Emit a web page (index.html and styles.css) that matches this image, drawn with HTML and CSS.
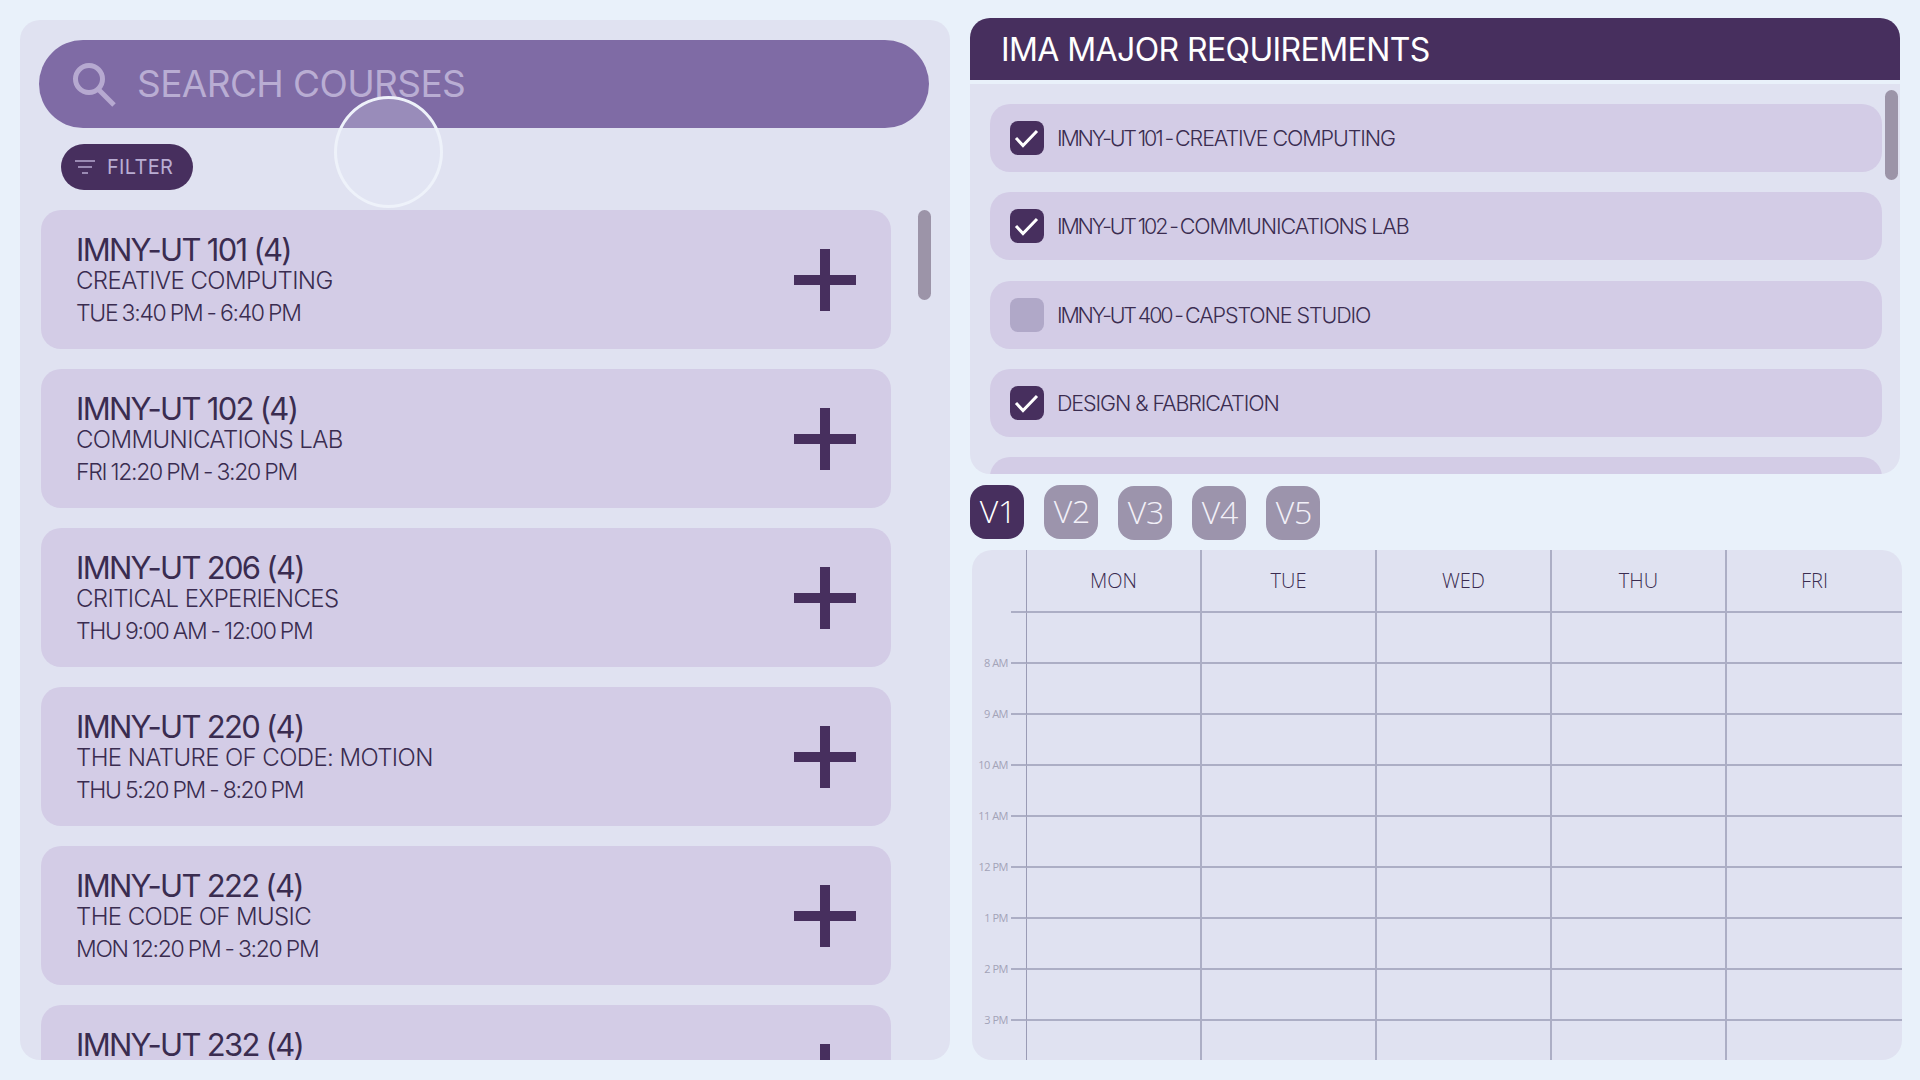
FILE: index.html
```html
<!doctype html>
<html>
<head>
  <meta charset="UTF-8">
  <title>Course Planner</title>
  <link rel="stylesheet" href="styles.css">
</head>
<body>
  <div class="page">
    <div class="courses">
      <div class="search">
        <svg class="search-icon" width="46" height="46" viewBox="0 0 46 46"><circle cx="18" cy="18" r="13.5" fill="none" stroke="#b6a9d0" stroke-width="5"/><path d="M27 28 L43 44" stroke="#b6a9d0" stroke-width="5" fill="none"/></svg>
        <span>SEARCH COURSES</span>
      </div>
      <div class="filter">
        <svg width="20" height="16" viewBox="0 0 20 16"><path d="M0 2H20M3 8H17M7 14H13" stroke="#b6a9d0" stroke-width="1.6" fill="none"/></svg>
        <span>FILTER</span>
      </div>
      <div class="scrollbar course-bar"></div>
      <div class="card">
        <div class="card-text"><h3>IMNY-UT 101 (4)</h3><p>CREATIVE COMPUTING</p><p class="when">TUE 3:40 PM - 6:40 PM</p></div>
        <svg class="plus" width="62" height="62" viewBox="0 0 62 62"><path d="M26 0H36V26H62V36H36V62H26V36H0V26H26Z" fill="#472f5e"/></svg>
      </div>
      <div class="card">
        <div class="card-text"><h3>IMNY-UT 102 (4)</h3><p>COMMUNICATIONS LAB</p><p class="when">FRI 12:20 PM - 3:20 PM</p></div>
        <svg class="plus" width="62" height="62" viewBox="0 0 62 62"><path d="M26 0H36V26H62V36H36V62H26V36H0V26H26Z" fill="#472f5e"/></svg>
      </div>
      <div class="card">
        <div class="card-text"><h3>IMNY-UT 206 (4)</h3><p>CRITICAL EXPERIENCES</p><p class="when">THU 9:00 AM - 12:00 PM</p></div>
        <svg class="plus" width="62" height="62" viewBox="0 0 62 62"><path d="M26 0H36V26H62V36H36V62H26V36H0V26H26Z" fill="#472f5e"/></svg>
      </div>
      <div class="card">
        <div class="card-text"><h3>IMNY-UT 220 (4)</h3><p>THE NATURE OF CODE: MOTION</p><p class="when">THU 5:20 PM - 8:20 PM</p></div>
        <svg class="plus" width="62" height="62" viewBox="0 0 62 62"><path d="M26 0H36V26H62V36H36V62H26V36H0V26H26Z" fill="#472f5e"/></svg>
      </div>
      <div class="card">
        <div class="card-text"><h3>IMNY-UT 222 (4)</h3><p>THE CODE OF MUSIC</p><p class="when">MON 12:20 PM - 3:20 PM</p></div>
        <svg class="plus" width="62" height="62" viewBox="0 0 62 62"><path d="M26 0H36V26H62V36H36V62H26V36H0V26H26Z" fill="#472f5e"/></svg>
      </div>
      <div class="card">
        <div class="card-text"><h3>IMNY-UT 232 (4)</h3><p>&nbsp;</p><p class="when">&nbsp;</p></div>
        <svg class="plus" width="62" height="62" viewBox="0 0 62 62"><path d="M26 0H36V26H62V36H36V62H26V36H0V26H26Z" fill="#472f5e"/></svg>
      </div>
    </div>

    <div class="side">
      <div class="req-head">IMA MAJOR REQUIREMENTS</div>
      <div class="reqs">
        <div class="scrollbar req-bar"></div>
        <div class="req"><span class="check on"><svg width="34" height="34" viewBox="0 0 34 34"><path d="M6 17L13 24.5L27 10" fill="none" stroke="#fff" stroke-width="3"/></svg></span><span><span class="code">IMNY-UT 101 - </span>CREATIVE COMPUTING</span></div>
        <div class="req"><span class="check on"><svg width="34" height="34" viewBox="0 0 34 34"><path d="M6 17L13 24.5L27 10" fill="none" stroke="#fff" stroke-width="3"/></svg></span><span><span class="code">IMNY-UT 102 - </span>COMMUNICATIONS LAB</span></div>
        <div class="req"><span class="check"></span><span><span class="code">IMNY-UT 400 - </span>CAPSTONE STUDIO</span></div>
        <div class="req"><span class="check on"><svg width="34" height="34" viewBox="0 0 34 34"><path d="M6 17L13 24.5L27 10" fill="none" stroke="#fff" stroke-width="3"/></svg></span><span>DESIGN &amp; FABRICATION</span></div>
        <div class="req"></div>
      </div>

      <div class="versions">
        <div class="ver active">V1</div>
        <div class="ver">V2</div>
        <div class="ver low">V3</div>
        <div class="ver low">V4</div>
        <div class="ver low">V5</div>
      </div>

      <div class="cal">
        <div class="corner"></div>
        <div class="day">MON</div><div class="day">TUE</div><div class="day">WED</div><div class="day">THU</div><div class="day">FRI</div>

        <div class="hour"><span>8 AM</span><i></i></div>
        <div class="cell"></div><div class="cell"></div><div class="cell"></div><div class="cell"></div><div class="cell"></div>
        <div class="hour"><span>9 AM</span><i></i></div>
        <div class="cell"></div><div class="cell"></div><div class="cell"></div><div class="cell"></div><div class="cell"></div>
        <div class="hour"><span>10 AM</span><i></i></div>
        <div class="cell"></div><div class="cell"></div><div class="cell"></div><div class="cell"></div><div class="cell"></div>
        <div class="hour"><span>11 AM</span><i></i></div>
        <div class="cell"></div><div class="cell"></div><div class="cell"></div><div class="cell"></div><div class="cell"></div>
        <div class="hour"><span>12 PM</span><i></i></div>
        <div class="cell"></div><div class="cell"></div><div class="cell"></div><div class="cell"></div><div class="cell"></div>
        <div class="hour"><span>1 PM</span><i></i></div>
        <div class="cell"></div><div class="cell"></div><div class="cell"></div><div class="cell"></div><div class="cell"></div>
        <div class="hour"><span>2 PM</span><i></i></div>
        <div class="cell"></div><div class="cell"></div><div class="cell"></div><div class="cell"></div><div class="cell"></div>
        <div class="hour"><span>3 PM</span><i></i></div>
        <div class="cell"></div><div class="cell"></div><div class="cell"></div><div class="cell"></div><div class="cell"></div>
        <div class="hour last"></div>
        <div class="cell last"></div><div class="cell last"></div><div class="cell last"></div><div class="cell last"></div><div class="cell last"></div>
      </div>
    </div>
  </div>
  <div class="touch"></div>
</body>
</html>
```

FILE: styles.css
```css
*{margin:0;
  padding:0;
  box-sizing:border-box;}
body{width:1920px;
     height:1080px;
     overflow:hidden;
     background:#e9f1fa;
     font-family:"Inter","Liberation Sans",sans-serif;
     color:#3a2c50;}
.page{display:flex;
      gap:20px;
      padding:18px 20px 20px;
      height:1080px;}

/* left column */
.courses{position:relative;
         width:930px;
         height:1040px;
         margin-top:2px;
         padding:20px 21px 0 19px;
         background:#e0e2f1;
         border-radius:20px;
         overflow:hidden;}
.search{display:flex;
        align-items:center;
        gap:20px;
        height:88px;
        padding-left:32px;
        background:#7f6ba5;
        border-radius:44px;
        color:#b9add3;
        font-size:37px;
        font-weight:400;
        letter-spacing:-0.6px;}
.search span{margin-top:-2px;}
.search-icon{flex:none;}
.filter{display:flex;
        align-items:center;
        gap:12px;
        width:132px;
        height:46px;
        margin:16px 0 20px 22px;
        padding-left:14px;
        background:#472f5e;
        border-radius:23px;
        color:#b9add3;
        font-size:20px;
        font-weight:400;
        letter-spacing:0.3px;}
.card{display:flex;
      align-items:center;
      justify-content:space-between;
      width:850px;
      height:139px;
      margin:0 0 20px 2px;
      padding:0 35px 0 35px;
      background:#d3cce6;
      border-radius:20px;}
.card h3{padding-top:3px;
         font-size:31px;
         font-weight:400;
         line-height:32px;
         letter-spacing:-1.7px;}
.card p{font-size:24px;
        font-weight:300;
        line-height:29px;
        letter-spacing:-0.6px;}
.card .when{margin-top:4px;
            font-size:23px;
            letter-spacing:-1.3px;
            word-spacing:-0.9px;}
.scrollbar{position:absolute;
           width:13px;
           background:#9c94a8;
           border-radius:7px;}
.course-bar{left:898px;
            top:190px;
            height:90px;}

/* right column */
.side{width:930px;}
.req-head{height:62px;
          padding-left:31px;
          background:#472f5e;
          border-radius:20px 20px 0 0;
          color:#fff;
          font-size:32px;
          font-weight:400;
          line-height:63px;
          letter-spacing:-0.6px;}
.reqs{position:relative;
      height:390px;
      margin-top:4px;
      padding:20px 18px 0 20px;
      background:#e0e2f1;
      border-radius:0 0 20px 20px;
      overflow:hidden;}
.req{display:flex;
     align-items:center;
     gap:13px;
     height:68px;
     margin-bottom:20.3px;
     padding-left:20px;
     background:#d3cce6;
     border-radius:20px;
     font-size:21.5px;
     font-weight:300;
     letter-spacing:-1.1px;
     white-space:pre;}
.code{letter-spacing:-2.2px;
      word-spacing:-0.8px;}
.check{display:flex;
       align-items:center;
       justify-content:center;
       width:34px;
       height:34px;
       background:#b0a8c8;
       border-radius:8px;}
.check.on{background:#472f5e;}
.req-bar{right:2px;
         top:6px;
         height:90px;}

.versions{display:flex;
          gap:20px;
          margin:11px 0;}
.ver{width:54px;
     height:54px;
     padding-left:2px;
     background:#9c94ac;
     border-radius:16px;
     color:#f2f0f8;
     font-family:"Open Sans",sans-serif;
     font-size:32px;
     font-weight:300;
     line-height:52px;
     text-align:center;}
.ver.low{transform:translateY(1px);}
.ver.active{background:#472f5e;
            color:#fff;}

.cal{display:grid;
     grid-template-columns:54px 174px 175px 175px 175px 177px;
     grid-template-rows:63px repeat(9,51px);
     width:930px;
     height:510px;
     margin-left:2px;
     background:#e0e2f1;
     border-radius:20px;
     overflow:hidden;
     font-family:"Open Sans",sans-serif;}
.corner,.hour{display:flex;
              align-items:flex-end;}
.day{padding-top:17px;
     border-left:2px solid #acaec5;
     border-bottom:2px solid #acaec5;
     font-size:20px;
     font-weight:300;
     line-height:28px;
     text-align:center;}
.day:nth-child(2),.cell:nth-child(6n+2){border-left-width:1px;
                                         border-left-color:#9a9bb5;}
.corner{border-bottom:2px solid #acaec5;
        margin-left:39px;}
.cell{border-left:2px solid #acaec5;
      border-bottom:2px solid #acaec5;}
.cell.last{border-bottom:0;}
.hour span{width:39px;
           margin-bottom:-6px;
           padding-right:3px;
           color:#a3a3b8;
           font-size:11px;
           letter-spacing:-0.5px;
           line-height:14px;
           text-align:right;
           white-space:nowrap;}
.hour i{flex:1;
        height:2px;
        background:#acaec5;}

/* touch marker over the page */
.touch{position:absolute;
       left:334px;
       top:96px;
       width:109px;
       height:112px;
       border:3px solid #eef2fa;
       border-radius:50%;
       background:rgba(233,241,250,0.25);}
```
